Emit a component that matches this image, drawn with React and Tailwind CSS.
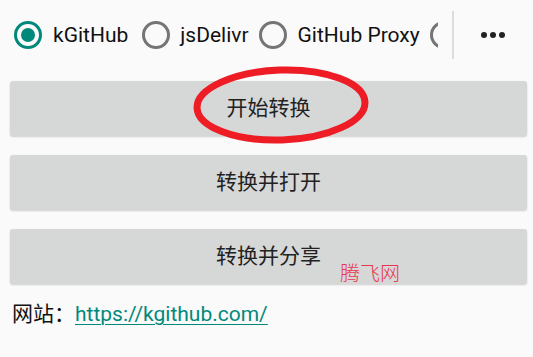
import React from "react";

const font = { fontFamily: 'Roboto, "Noto Sans CJK SC", sans-serif' };

function Radio({ checked }) {
  return (
    <span
      className={`flex h-[28px] w-[28px] shrink-0 items-center justify-center rounded-full border-[3px] ${
        checked ? "border-[#00897b]" : "border-[#757575]"
      }`}
    >
      {checked && <span className="h-[14px] w-[14px] rounded-full bg-[#00897b]" />}
    </span>
  );
}

function Btn({ children }) {
  return (
    <div className="flex h-[55px] items-center justify-center rounded-[3px] bg-[#d6d7d7] text-[21px] text-[#222] shadow-[0_1px_2px_rgba(0,0,0,0.18)]">
      {children}
    </div>
  );
}

export default function App() {
  return (
    <div
      className="relative h-[357px] w-[533px] overflow-hidden bg-[#fafafa] text-[#111]"
      style={font}
    >
      <div className="flex h-[70px] items-center">
        <div className="flex w-[438px] items-center overflow-hidden pl-[14px] text-[21px] leading-none">
          <Radio checked />
          <span className="ml-[11px] mr-[14px]">kGitHub</span>
          <Radio />
          <span className="ml-[10px] mr-[10px]">jsDelivr</span>
          <Radio />
          <span className="ml-[11px] mr-[10px] whitespace-nowrap">GitHub Proxy</span>
          <Radio />
        </div>
        <div className="ml-[14px] h-[48px] w-[2px] bg-[#dcdcdc]" />
        <div className="flex flex-1 items-center justify-center gap-[3px] pr-[2px]">
          <span className="h-[6px] w-[6px] rounded-full bg-[#222]" />
          <span className="h-[6px] w-[6px] rounded-full bg-[#222]" />
          <span className="h-[6px] w-[6px] rounded-full bg-[#222]" />
        </div>
      </div>

      <div className="mt-[11px] ml-[10px] mr-[6px] flex flex-col gap-[19px]">
        <Btn>开始转换</Btn>
        <Btn>转换并打开</Btn>
        <Btn>转换并分享</Btn>
      </div>

      <div className="mt-[15px] ml-[12px] flex items-center text-[21px]">
        <span>网站：</span>
        <span className="text-[#00897b] underline decoration-1 underline-offset-[3px]">
          https://kgithub.com/
        </span>
      </div>

      <div className="absolute left-[340px] top-[259px] text-[20px] font-light text-[#e8384f]">
        腾飞网
      </div>

      <svg
        className="absolute left-[186px] top-[60px]"
        width="190"
        height="90"
        viewBox="0 0 190 90"
      >
        <ellipse
          cx="95"
          cy="45"
          rx="84"
          ry="35"
          fill="none"
          stroke="#ee1c25"
          strokeWidth="7"
          transform="rotate(-2 95 45)"
        />
      </svg>
    </div>
  );
}
